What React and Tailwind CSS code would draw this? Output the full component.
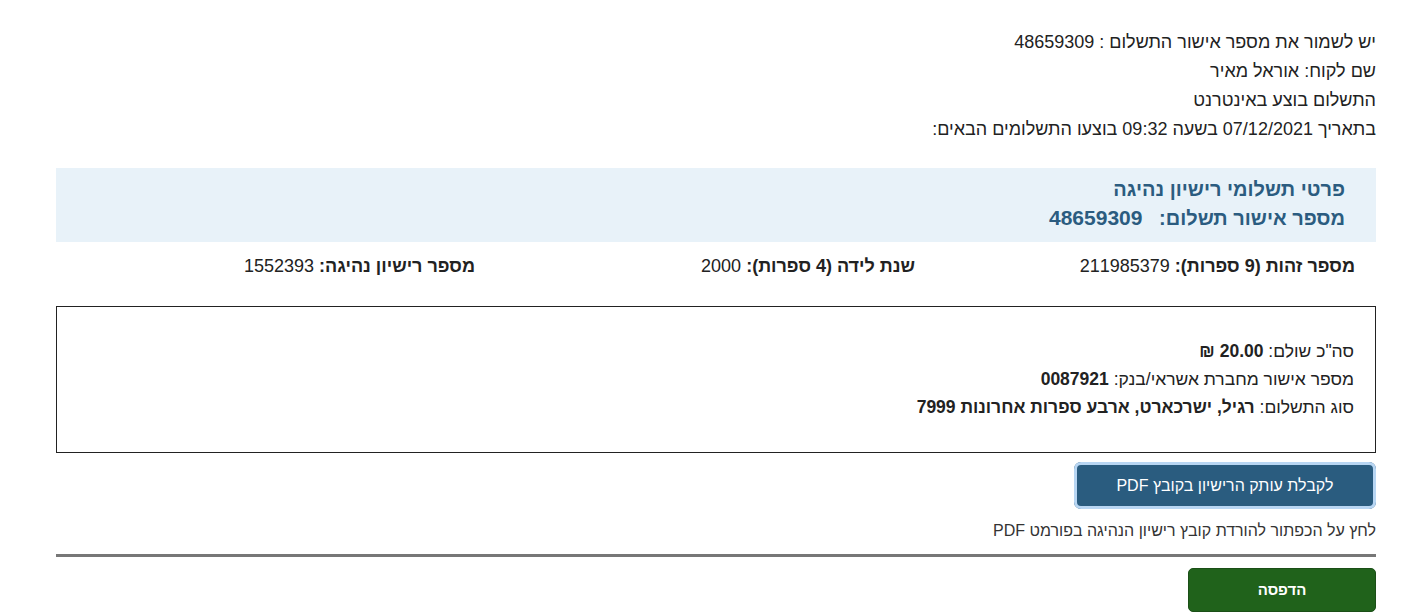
export default function App() {
  const ff = { fontFamily: '"Liberation Sans", Arial, sans-serif' }
  return (
    <div dir="rtl" style={ff} className="w-[1427px] min-h-[615px] bg-white text-[#222] text-[18px]">
      <div className="ml-[56px] mr-[51px] pt-[28px]">
        <div className="leading-[29px]">
          <p>יש לשמור את מספר אישור התשלום : 48659309</p>
          <p>שם לקוח: אוראל מאיר</p>
          <p>התשלום בוצע באינטרנט</p>
          <p>בתאריך 07/12/2021 בשעה 09:32 בוצעו התשלומים הבאים:</p>
        </div>

        <div className="mt-[24px] bg-[#e8f2f9] px-[31px] pt-[7px] pb-[9px] text-[#2b5c80] font-bold">
          <p className="text-[20px] leading-[28px]">פרטי תשלומי רישיון נהיגה</p>
          <p className="text-[20px] leading-[30px]">
            מספר אישור תשלום:&nbsp;&nbsp;&nbsp;<span className="text-[21px]">48659309</span>
          </p>
        </div>

        <div className="grid grid-cols-3 pt-[12px] pb-[12px] leading-[24px]">
          <p className="pr-[21px]"><b>מספר זהות (9 ספרות):</b> 211985379</p>
          <p className="pr-[21px]"><b>שנת לידה (4 ספרות):</b> 2000</p>
          <p className="pr-[21px]"><b>מספר רישיון נהיגה:</b> 1552393</p>
        </div>

        <div className="mt-[16px] border border-[#222] px-[21px] pt-[30px] pb-[31px] leading-[28px] text-[17.5px]">
          <p>סה"כ שולם: <b>20.00 ₪</b></p>
          <p>מספר אישור מחברת אשראי/בנק: <b>0087921</b></p>
          <p>סוג התשלום: <b>רגיל, ישרכארט, ארבע ספרות אחרונות 7999</b></p>
        </div>

        <div className="mt-[9px] flex">
          <button style={ff} className="w-[302px] h-[47px] rounded-[7px] bg-[#2a5c7f] text-white text-[16px] ring-[3px] ring-[#b8d6f3] ring-inset border-0">
            לקבלת עותק הרישיון בקובץ PDF
          </button>
        </div>

        <p className="mt-[12px] text-[16px] leading-[20px] text-[#333]">לחץ על הכפתור להורדת קובץ רישיון הנהיגה בפורמט PDF</p>

        <div className="mt-[13px] h-[3px] bg-[#777]" />

        <div className="mt-[11px] flex">
          <button style={ff} className="w-[188px] h-[44px] rounded-[5px] bg-[#20621b] border border-[#1b4f17] text-white text-[15px] font-bold">
            הדפסה
          </button>
        </div>
      </div>
    </div>
  )
}
